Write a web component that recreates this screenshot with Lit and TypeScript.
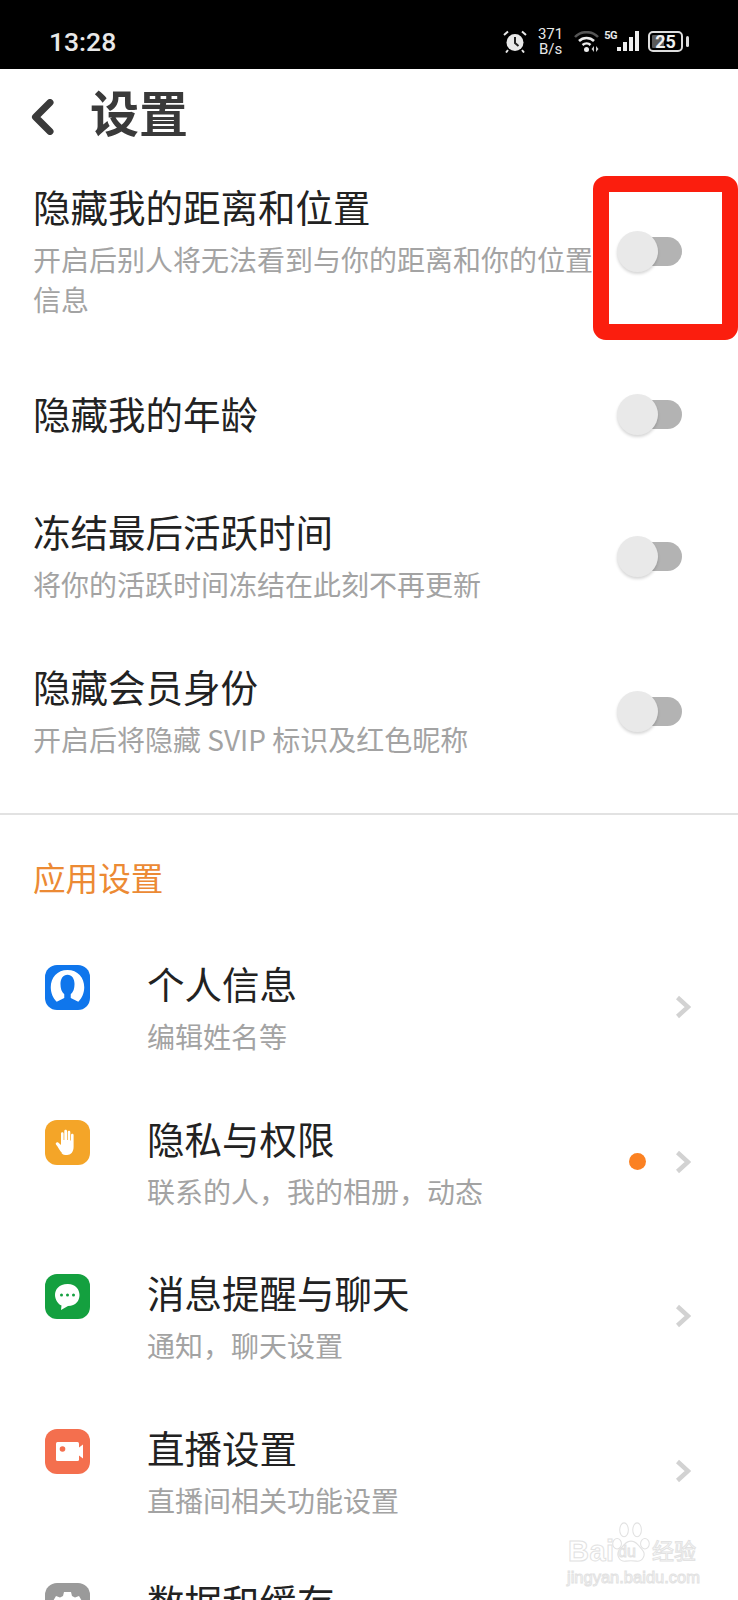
import { LitElement, css, html, svg } from 'lit';
import { customElement } from 'lit/decorators.js';

const toggles = [
  { title: '隐藏我的距离和位置', sub: '开启后别人将无法看到与你的距离和你的位置信息' },
  { title: '隐藏我的年龄', sub: '' },
  { title: '冻结最后活跃时间', sub: '将你的活跃时间冻结在此刻不再更新' },
  { title: '隐藏会员身份', sub: '开启后将隐藏 SVIP 标识及红色昵称' },
];

const icons = {
  person: svg`<path transform="translate(-1.800 -1.500) scale(1.080)" fill="#fff" d="M22.500 6C13 6 7 13 7 22c0 5 2 10 5.500 13.500l7-3.500v-3.500c-2.500-2-3.500-5.500-3.500-9.500 0-5 2.500-8.500 6.500-8.500s6.500 3.500 6.500 8.500c0 4-1 7.500-3.500 9.500V32l7 3.500C36 32 38 27 38 22 38 13 32 6 22.500 6z"/>`,
  hand: svg`<path fill="#fff" d="M17 33c-2-2-4-6-6-8.500-1-1.500 1-3 2.500-1.800l2.500 2.300V13.500c0-1.800 2.600-1.800 2.600 0V20h.7v-9c0-1.800 2.700-1.800 2.700 0v9h.7v-8c0-1.800 2.600-1.800 2.600 0v8.500h.7v-5.500c0-1.800 2.600-1.800 2.600 0V27c0 5-3 8-6.500 8h-2c-1.600 0-2.600-.8-3.700-2z"/>`,
  chat: svg`<path fill="#fff" d="M22.500 10C14 10 10 15.500 10 21c0 5 3.500 9.500 6.500 10.500l-.5 4.500 7-4c8 0 11.500-5.500 11.500-11 0-5.500-4-11-11.500-11z"/>
    <circle cx="16.500" cy="21" r="1.500" fill="#14a03f"/><circle cx="22.500" cy="21" r="1.500" fill="#14a03f"/><circle cx="28.500" cy="21" r="1.500" fill="#14a03f"/>`,
  video: svg`<rect x="11" y="13" width="23" height="19" rx="1.500" fill="#fff"/><path fill="#fff" d="M32 20l6-4.500v14L32 25z"/><circle cx="17.500" cy="20" r="2.800" fill="#f46f4e"/>`,
  gear: svg`<path fill="#fff" d="M19 9h7l1 4 3 1.500 4-1.500 3.500 6-3 3v3l3 3-3.500 6-4-1.500-3 1.500-1 4h-7l-1-4-3-1.500-4 1.500-3.500-6 3-3v-3l-3-3 3.500-6 4 1.500 3-1.500z"/><circle cx="22.500" cy="22.500" r="4.500" fill="#9a9a9a"/>`,
};

const settings = [
  { title: '个人信息', sub: '编辑姓名等', color: '#0f76ec', icon: icons.person, dot: false },
  { title: '隐私与权限', sub: '联系的人，我的相册，动态', color: '#f4a528', icon: icons.hand, dot: true },
  { title: '消息提醒与聊天', sub: '通知，聊天设置', color: '#14a03f', icon: icons.chat, dot: false },
  { title: '直播设置', sub: '直播间相关功能设置', color: '#f46f4e', icon: icons.video, dot: false },
  { title: '数据和缓存', sub: '', color: '#9a9a9a', icon: icons.gear, dot: false },
];

@customElement('app-root')
export class AppRoot extends LitElement {
  static styles = css`
    :host {
      display: block;
      position: relative;
      height: 1600px;
      overflow: hidden;
      background: #fff;
      color: #222;
      font-family: 'Noto Sans CJK SC', 'Noto Sans', sans-serif;
    }

    .status {
      height: 69px;
      box-sizing: border-box;
      background: #000;
      color: #e8e8e8;
      display: flex;
      align-items: center;
      padding: 14px 49px 0 49px;
      font-family: Roboto, sans-serif;
    }
    .time {
      font-size: 26.5px;
      font-weight: 500;
      flex: 1;
    }
    .speed {
      font-size: 15px;
      line-height: 15px;
      text-align: center;
      margin: 0 11px;
    }
    .status svg {
      display: block;
    }
    .wifi {
      margin-right: 4px;
    }
    .fiveg {
      font-size: 11px;
      font-weight: 700;
      letter-spacing: -0.5px;
      align-self: flex-start;
      margin-top: 16px;
      line-height: 12px;
    }
    .battery {
      width: 35px;
      height: 21px;
      box-sizing: border-box;
      border: 2px solid #ddd;
      border-radius: 5px;
      margin-left: 9px;
      position: relative;
      display: flex;
      align-items: center;
      justify-content: center;
      font-size: 18px;
      font-weight: 700;
    }
    .battery i {
      position: absolute;
      left: 2px;
      top: 2px;
      bottom: 2px;
      width: 12px;
      background: #5a5a5a;
      border-radius: 1px;
    }
    .battery span {
      position: relative;
      line-height: 17px;
      color: #f0f0f0;
    }
    .nub {
      width: 3px;
      height: 11px;
      background: #ddd;
      border-radius: 2px;
      margin-left: 3px;
    }

    .header {
      height: 92px;
      display: flex;
      align-items: center;
      padding-left: 31px;
      gap: 36px;
      color: #3a3a3a;
    }
    .header h1 {
      margin: 0 0 8px;
      font-size: 49px;
      line-height: 60px;
      font-weight: 700;
    }
    .header svg {
      display: block;
      margin-top: 4px;
    }

    .toggles {
      padding: 20px 55px 0 33px;
      display: flex;
      flex-direction: column;
      gap: 57px;
      height: 654px;
      box-sizing: border-box;
      border-bottom: 2px solid #e2e2e2;
    }
    .row {
      display: flex;
      align-items: center;
    }
    .row.plain {
      padding: 12px 0;
      margin-bottom: -1px;
    }
    .row .text {
      width: 562px;
      flex: none;
    }
    .title {
      font-size: 37.5px;
      line-height: 50px;
      color: #222;
    }
    .sub {
      font-size: 28px;
      line-height: 40px;
      color: #a3a3a3;
      margin-top: 8px;
    }

    .switch {
      position: relative;
      width: 65px;
      height: 42px;
      margin: 3px 0 0 22px;
    }
    .switch .track {
      position: absolute;
      right: 0;
      top: 6px;
      width: 55px;
      height: 29px;
      border-radius: 15px;
      background: #b3b3b3;
    }
    .switch .knob {
      position: absolute;
      left: 0;
      top: 0;
      width: 41px;
      height: 41px;
      border-radius: 50%;
      background: #e9e9e9;
      box-shadow: 0 2px 3px rgba(0, 0, 0, 0.16);
    }

    .section {
      height: 143px;
      box-sizing: border-box;
      padding: 40px 0 0 33px;
      font-size: 32.6px;
      line-height: 44px;
      color: #ec8a34;
    }

    .item {
      height: 154.5px;
      display: flex;
      align-items: flex-start;
      padding: 0 47px 0 45px;
    }
    .badge {
      width: 45px;
      height: 45px;
      border-radius: 12px;
      flex: none;
      margin: 7px 57px 0 0;
    }
    .badge svg {
      display: block;
    }
    .item .text {
      flex: 1;
    }
    .dot {
      width: 17px;
      height: 17px;
      border-radius: 50%;
      background: #fb8122;
      margin: 40px 29px 0 0;
    }
    .chev {
      margin-top: 37px;
      display: block;
    }

    .mark {
      position: absolute;
      left: 568px;
      top: 1534px;
      width: 132px;
      height: 50px;
      color: #fff;
      font-family: 'Liberation Sans', 'Noto Sans CJK SC', sans-serif;
      -webkit-text-stroke: 1px #e2e2e2;
    }
    .mark .brand {
      position: absolute;
      left: 0;
      top: 0;
      font-size: 29px;
      line-height: 34px;
      font-weight: 700;
      white-space: nowrap;
      letter-spacing: 0.5px;
    }
    .mark .cn {
      position: absolute;
      left: 84px;
      top: 4px;
      font-size: 22px;
      line-height: 28px;
      white-space: nowrap;
    }
    .mark .url {
      position: absolute;
      left: -1px;
      top: 33px;
      font-size: 16.5px;
      line-height: 20px;
      white-space: nowrap;
    }
    .mark svg {
      position: absolute;
      left: 43px;
      top: -14px;
    }
    .mark .du {
      position: absolute;
      left: 50px;
      top: 8px;
      font-size: 16px;
      line-height: 20px;
    }
    .frame {
      position: absolute;
      left: 593px;
      top: 176px;
      width: 145px;
      height: 164px;
      box-sizing: border-box;
      border: 16px solid #fb1e0e;
      border-radius: 13px;
    }
  `;

  renderSwitch() {
    return html`<div class="switch"><div class="track"></div><div class="knob"></div></div>`;
  }

  render() {
    return html`
      <div class="status">
        <span class="time">13:28</span>
        <svg width="24" height="23" viewBox="0 0 24 23">
          <circle cx="12" cy="12.500" r="8.500" fill="#e8e8e8"/>
          <path d="M12 7v6l3.500 3" fill="none" stroke="#222" stroke-width="2"/>
          <path d="M1 5l4-3.500M23 5l-4-3.500M5 20l-2 2.500M19 20l2 2.500" stroke="#e8e8e8" stroke-width="2"/>
        </svg>
        <div class="speed">371<br />B/s</div>
        <svg class="wifi" width="26" height="22" viewBox="0 0 26 22">
          <path d="M1 6c6-6.500 17-6.500 23 0" fill="none" stroke="#555" stroke-width="2.500"/>
          <path d="M5 10c4-4 11-4 15 0M8.500 14c2.500-2 6-2 8 0" fill="none" stroke="#eee" stroke-width="2.500"/>
          <circle cx="12.500" cy="18.500" r="2.500" fill="#eee"/>
          <path d="M20 15v6l-2.500-3zM22 15v6l2.500-3z" fill="#ccc"/>
        </svg>
        <span class="fiveg">5G</span>
        <svg width="22" height="21" viewBox="0 0 22 21">
          <g fill="#eee">
            <rect x="0" y="16" width="4" height="4"/>
            <rect x="6" y="11" width="4" height="9"/>
            <rect x="12" y="6" width="4" height="14"/>
            <rect x="18" y="0" width="4" height="20"/>
          </g>
        </svg>
        <div class="battery"><i></i><span>25</span></div>
        <div class="nub"></div>
      </div>

      <div class="header">
        <svg width="23" height="36" viewBox="0 0 23 36">
          <path d="M19 3.500L4.500 18 19 32.500" fill="none" stroke="#3a3a3a" stroke-width="7" stroke-linecap="round" stroke-linejoin="round"/>
        </svg>
        <h1>设置</h1>
      </div>

      <div class="toggles">
        ${toggles.map(
          (t) => html`
            <div class="row ${t.sub ? '' : 'plain'}">
              <div class="text">
                <div class="title">${t.title}</div>
                ${t.sub ? html`<div class="sub">${t.sub}</div>` : ''}
              </div>
              ${this.renderSwitch()}
            </div>
          `,
        )}
      </div>

      <div class="section">应用设置</div>

      ${settings.map(
        (s) => html`
          <div class="item">
            <div class="badge" style="background:${s.color}">
              <svg width="45" height="45" viewBox="0 0 45 45">${s.icon}</svg>
            </div>
            <div class="text">
              <div class="title">${s.title}</div>
              ${s.sub ? html`<div class="sub">${s.sub}</div>` : ''}
            </div>
            ${s.dot ? html`<div class="dot"></div>` : ''}
            <svg class="chev" width="16" height="24" viewBox="0 0 16 24">
              <path d="M2.500 2.500L13 12 2.500 21.500" fill="none" stroke="#d2d2d2" stroke-width="4.500"/>
            </svg>
          </div>
        `,
      )}

      <div class="mark">
        <div class="brand">Bai</div>
        <svg width="40" height="44" viewBox="0 0 46 50" fill="#fff" stroke="#e2e2e2" stroke-width="1.200">
          <ellipse cx="7" cy="27" rx="5" ry="6"/>
          <ellipse cx="15" cy="11" rx="5" ry="8"/>
          <ellipse cx="30" cy="11" rx="5" ry="8"/>
          <ellipse cx="39" cy="27" rx="5" ry="6"/>
          <path d="M23 24c-7 0-8 5-13 10-5 6 0 14 7 13 4-.5 8-.5 12 0 7 1 12-7 7-13-5-5-6-10-13-10z"/>
        </svg>
        <div class="du">du</div>
        <div class="cn">经验</div>
        <div class="url">jingyan.baidu.com</div>
      </div>

      <div class="frame"></div>
    `;
  }
}
